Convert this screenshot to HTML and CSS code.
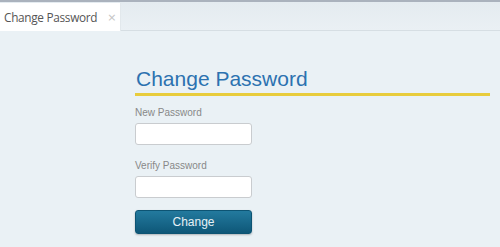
FILE: index.html
```html
<!DOCTYPE html>
<html lang="en">
<head>
    <meta charset="UTF-8">
    <title>Change Password</title>
    <link rel="stylesheet" href="styles.css">
</head>
<body>
    <div class="tab-bar">
        <div class="tab">
            <span class="tab-title">Change Password</span>
            <span class="tab-close">&times;</span>
        </div>
    </div>

    <div class="page">
        <form class="pw-form">
            <h1>Change Password</h1>

            <div class="field">
                <label for="newPassword">New Password</label>
                <input type="password" id="newPassword">
            </div>

            <div class="field">
                <label for="verifyPassword">Verify Password</label>
                <input type="password" id="verifyPassword">
            </div>

            <button type="button" class="btn-change">Change</button>
        </form>
    </div>
</body>
</html>
```

FILE: styles.css
```css
* {
    margin: 0;
    padding: 0;
    box-sizing: border-box;
}

body {
    background: #eaf1f5;
    font-family: 'Liberation Sans', Arial, sans-serif;
    height: 247px;
    overflow: hidden;
}

/* Tabs */
.tab-bar {
    height: 31px;
    border-top: 2px solid #aab2bd;
    border-bottom: 1px solid #d6dee3;
    background: linear-gradient(#e4ebf0, #eaf0f4);
    display: flex;
    align-items: flex-end;
}

.tab {
    flex: 0 0 121px;
    height: 28px;
    background: #fff;
    display: flex;
    align-items: center;
    padding-left: 4px;
    margin-bottom: -1px;
    border-right: 1px solid #e2e8ec;
    white-space: nowrap;
}

.tab-title {
    font-family: 'Open Sans', sans-serif;
    font-size: 11.8px;
    color: #555;
    letter-spacing: -0.3px;
}

.tab-close {
    font-family: 'DejaVu Sans', sans-serif;
    font-size: 11px;
    color: #c4c4c4;
    margin-left: 10px;
}

/* Form */
.page {
    padding: 36px 0 0 135px;
}

.pw-form h1 {
    font-size: 21px;
    font-weight: normal;
    line-height: 24px;
    color: #2c72b0;
    padding: 0 0 2px 1px;
    border-bottom: 3px solid #e8cc3c;
    width: 355px;
}

.field {
    margin-top: 10px;
}

.field + .field {
    margin-top: 14px;
}

.field label {
    display: block;
    font-size: 10px;
    line-height: 14px;
    color: #888;
    margin-bottom: 3px;
}

.field input {
    display: block;
    width: 117px;
    height: 22px;
    border: 1px solid #c9cccf;
    border-radius: 3px;
    background: #fff;
}

.btn-change {
    display: block;
    margin-top: 12px;
    width: 117px;
    height: 24px;
    border: 1px solid #0d5473;
    border-radius: 3px;
    background: linear-gradient(#237a9e, #0e5778);
    box-shadow: 0 1px 2px rgba(0, 0, 0, 0.25);
    color: #e6f1f6;
    font-family: 'Liberation Sans', Arial, sans-serif;
    font-size: 12px;
}
```
